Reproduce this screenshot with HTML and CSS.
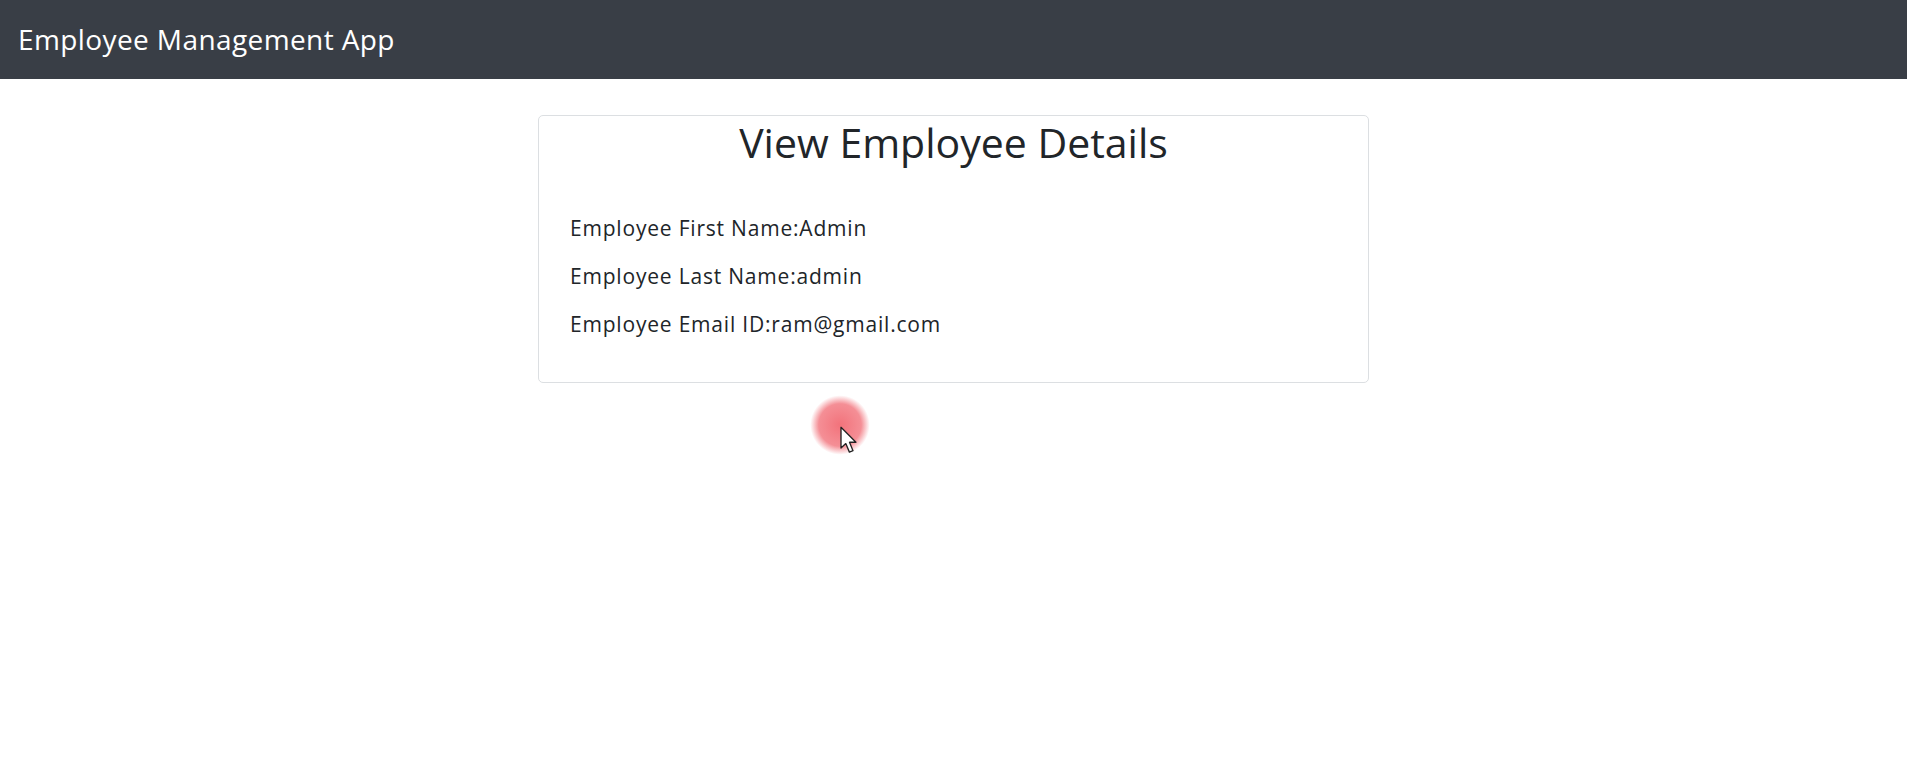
FILE: index.html
```html
<!DOCTYPE html>
<html lang="en">
<head>
<meta charset="utf-8">
<title>Employee Management App</title>
<link rel="stylesheet" href="styles.css">
</head>
<body>
<header class="navbar">
  <span class="brand">Employee Management App</span>
</header>
<main class="main">
  <section class="card">
    <h2 class="card-title">View Employee Details</h2>
    <div class="card-body">
      <p class="row">Employee First Name:Admin</p>
      <p class="row">Employee Last Name:admin</p>
      <p class="row">Employee Email ID:ram@gmail.com</p>
    </div>
  </section>
</main>
<div class="click-mark">
  <div class="click-circle"></div>
  <svg class="pointer" width="20" height="28" viewBox="0 0 14 21">
    <path d="M1 1 L1 16.5 L4.6 13.2 L7.3 19.6 L10 18.5 L7.4 12.2 L12.2 12.2 Z" fill="#ffffff" stroke="#222" stroke-width="1" stroke-linejoin="round"/>
  </svg>
</div>
</body>
</html>
```
FILE: styles.css
```css
html, body {
  margin: 0;
  padding: 0;
  background: #ffffff;
}
body {
  font-family: "Open Sans", "Noto Sans", "Liberation Sans", sans-serif;
  color: #212529;
  position: relative;
  min-height: 784px;
}
.navbar {
  height: 79px;
  background: #393e46;
  display: flex;
  align-items: center;
  padding-left: 18px;
  box-sizing: border-box;
}
.brand {
  color: #ffffff;
  font-size: 28px;
  letter-spacing: 0.4px;
  line-height: 1;
  padding-bottom: 1px;
}
.main {
  padding-top: 36px;
}
.card {
  width: 831px;
  margin: 0 auto;
  border: 1px solid #dcdfe2;
  border-radius: 5px;
  box-sizing: border-box;
}
.card-title {
  margin: 0;
  text-align: center;
  font-size: 41px;
  font-weight: 500;
  line-height: 50px;
  padding-top: 1px;
  color: #212529;
}
.card-body {
  padding: 47px 31px 44px;
}
.row {
  margin: 0 0 20px;
  font-size: 21px;
  letter-spacing: 0.8px;
  line-height: 28px;
}
.row:last-child {
  margin-bottom: 0;
}
.click-mark {
  position: absolute;
  left: 808px;
  top: 393px;
  width: 64px;
  height: 64px;
}
.click-circle {
  position: absolute;
  left: 2px;
  top: 2px;
  width: 60px;
  height: 60px;
  border-radius: 50%;
  background: radial-gradient(circle, rgba(240,90,100,0.85) 0%, rgba(240,95,105,0.7) 50%, rgba(245,120,130,0) 70%);
}
.pointer {
  position: absolute;
  left: 31px;
  top: 33px;
}
```
